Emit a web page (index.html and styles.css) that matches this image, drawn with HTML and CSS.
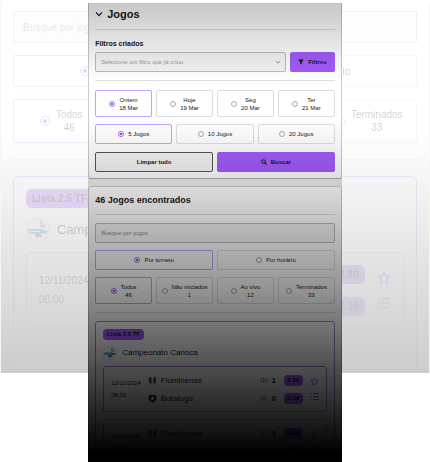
FILE: index.html
```
<!DOCTYPE html>
<html lang="pt-BR">
<head>
<meta charset="utf-8">
<meta name="viewport" content="width=device-width, initial-scale=1">
<title>Jogos</title>
<link rel="stylesheet" href="styles.css">
</head>
<body>
<svg class="sprite" aria-hidden="true">
  <symbol id="star" viewBox="0 0 24 24"><path d="M12 2l3 6.500 7 .8-5.200 4.800 1.400 7L12 17.600l-6.200 3.500 1.400-7L2 9.300l7-.8z" fill="none" stroke="currentColor" stroke-width="2.600" stroke-linejoin="round"/></symbol>
  <symbol id="list" viewBox="0 0 24 24"><path d="M8 4h15M8 12h15M8 20h15M1 4h3M1 12h3M1 20h3" fill="none" stroke="currentColor" stroke-width="2.800"/></symbol>
  <symbol id="league" viewBox="0 0 24 24"><circle cx="12" cy="12" r="11.300" fill="#fff" stroke="#c9ced4"/><path d="M2.500 11h13l3 1.500h3v3h-6l-2 1.500h-4l-1.500-1.500H2.500z" fill="#3d86b8"/><path d="M9 17h7v2.500l-3-1-3 1.500z" fill="#2b6a99"/><path d="M13 9l2-3 2 1 2-2 .5 3-2 2.500z" fill="#6fb5d8"/><circle cx="15" cy="4.500" r="1.300" fill="#4b9a7d"/><path d="M4 13.500h10" stroke="#fff"/></symbol>
  <symbol id="flu" viewBox="0 0 24 24"><path d="M1 6l5-4 6 2 6-2 5 4c-3 4 0 8-3 12-2 3-5 4-8 5-3-1-6-2-8-5C1 14 4 10 1 6z" fill="#f2f2f2"/><path d="M1 6l5-4 3 1v19c-2-1-4-2-5-4C1 14 4 10 1 6z" fill="#b01c3e"/><path d="M23 6l-5-4-3 1v19c2-1 4-2 5-4 3-4 0-8 3-12z" fill="#12704f"/><path d="M8 8l8 7M16 8l-8 7" stroke="#888" stroke-width="1.600"/></symbol>
  <symbol id="bot" viewBox="0 0 24 24"><path d="M2 4l6-1 4-2 4 2 6 1c1 6 1 10-2 14-2 2-5 4-8 5-3-1-6-3-8-5C1 14 1 10 2 4z" fill="#161616"/><path d="M12 5l2 4.500 5 .5-4 3.500 1.300 5L12 16l-4.300 2.500 1.300-5L5 10l5-.5z" fill="#fff"/></symbol>
</svg>

<div class="stage">
  <div class="backdrop" aria-hidden="true" inert>
    <div class="results">
      <input class="field" type="text" placeholder="Busque por jogos" aria-label="Busque por jogos">
      <div class="choices">
        <label class="choice"><input type="radio" name="bg-order" checked><span>Por torneio</span></label>
        <label class="choice"><input type="radio" name="bg-order"><span>Por horário</span></label>
      </div>
      <div class="choices tall">
        <label class="choice"><input type="radio" name="bg-status" checked><span>Todos<br>46</span></label>
        <label class="choice"><input type="radio" name="bg-status"><span>Não iniciados<br>1</span></label>
        <label class="choice"><input type="radio" name="bg-status"><span>Ao vivo<br>12</span></label>
        <label class="choice"><input type="radio" name="bg-status"><span>Terminados<br>33</span></label>
      </div>
      <hr class="rule">
      <section class="league">
        <span class="badge">Lista 2.5 TF</span>
        <h3 class="league-name"><svg><use href="#league"/></svg>Campeonato Carioca</h3>
        <article class="match">
          <div class="when"><span>12/11/2024</span><span>08:00</span></div>
          <div class="teams">
            <div class="team"><svg><use href="#flu"/></svg><span class="name">Fluminense</span><small>(1)</small><b>1</b><span class="odd">2.80</span></div>
            <div class="team"><svg><use href="#bot"/></svg><span class="name">Botafogo</span><small>(0)</small><b>0</b><span class="odd">2.19</span></div>
          </div>
          <div class="actions">
            <button type="button" aria-label="Favoritar"><svg><use href="#star"/></svg></button>
            <button type="button" aria-label="Detalhes"><svg><use href="#list"/></svg></button>
          </div>
        </article>
      </section>
    </div>
  </div>

  <main class="phone">
    <section class="card filters">
      <h1 class="title"><svg viewBox="0 0 12 12"><path d="M1.500 3.500L6 8.500l4.500-5" fill="none" stroke="currentColor" stroke-width="1.800"/></svg>Jogos</h1>
      <hr class="rule">
      <label class="caption" for="saved">Filtros criados</label>
      <div class="saved">
        <div class="select">
          <select class="field" id="saved"><option>Selecione um filtro que já criou</option></select>
          <svg viewBox="0 0 12 12"><path d="M1.500 3.500L6 8.500l4.500-5" fill="none" stroke="currentColor" stroke-width="1.500"/></svg>
        </div>
        <button class="btn primary" type="button"><svg viewBox="0 0 12 12"><path d="M.5 1h11L7.500 6v5l-3-1.500V6z" fill="currentColor"/></svg>Filtros</button>
      </div>
      <hr class="rule">
      <div class="choices tall">
        <label class="choice"><input type="radio" name="day" checked><span>Ontem<br>18 Mar</span></label>
        <label class="choice"><input type="radio" name="day"><span>Hoje<br>19 Mar</span></label>
        <label class="choice"><input type="radio" name="day"><span>Seg<br>20 Mar</span></label>
        <label class="choice"><input type="radio" name="day"><span>Ter<br>21 Mar</span></label>
      </div>
      <div class="choices">
        <label class="choice"><input type="radio" name="count" checked><span>5 Jogos</span></label>
        <label class="choice"><input type="radio" name="count"><span>10 Jogos</span></label>
        <label class="choice"><input type="radio" name="count"><span>20 Jogos</span></label>
      </div>
      <div class="buttons">
        <button class="btn" type="button">Limpar tudo</button>
        <button class="btn primary" type="button"><svg viewBox="0 0 12 12"><circle cx="5" cy="5" r="3.500" fill="none" stroke="currentColor" stroke-width="2"/><path d="M7.500 7.500L11 11" stroke="currentColor" stroke-width="2.200"/></svg>Buscar</button>
      </div>
    </section>

    <section class="card results">
      <h2 class="found">46 Jogos encontrados</h2>
      <hr class="rule">
      <input class="field" type="text" placeholder="Busque por jogos" aria-label="Busque por jogos">
      <div class="choices">
        <label class="choice"><input type="radio" name="order" checked><span>Por torneio</span></label>
        <label class="choice"><input type="radio" name="order"><span>Por horário</span></label>
      </div>
      <div class="choices tall">
        <label class="choice"><input type="radio" name="status" checked><span>Todos<br>46</span></label>
        <label class="choice"><input type="radio" name="status"><span>Não iniciados<br>1</span></label>
        <label class="choice"><input type="radio" name="status"><span>Ao vivo<br>12</span></label>
        <label class="choice"><input type="radio" name="status"><span>Terminados<br>33</span></label>
      </div>
      <hr class="rule">
      <section class="league">
        <span class="badge">Lista 2.5 TF</span>
        <h3 class="league-name"><svg><use href="#league"/></svg>Campeonato Carioca</h3>
        <article class="match">
          <div class="when"><span>12/11/2024</span><span>08:00</span></div>
          <div class="teams">
            <div class="team"><svg><use href="#flu"/></svg><span class="name">Fluminense</span><small>(1)</small><b>1</b><span class="odd">2.80</span></div>
            <div class="team"><svg><use href="#bot"/></svg><span class="name">Botafogo</span><small>(0)</small><b>0</b><span class="odd">2.19</span></div>
          </div>
          <div class="actions">
            <button type="button" aria-label="Favoritar"><svg><use href="#star"/></svg></button>
            <button type="button" aria-label="Detalhes"><svg><use href="#list"/></svg></button>
          </div>
        </article>
        <article class="match quiet">
          <div class="when"><span>12/11/2024</span><span>08:00</span></div>
          <div class="teams">
            <div class="team"><svg><use href="#flu"/></svg><span class="name">Fluminense</span><small>(1)</small><b>1</b><span class="odd">2.80</span></div>
            <div class="team"><svg><use href="#bot"/></svg><span class="name">Botafogo</span><small>(0)</small><b>0</b><span class="odd">2.19</span></div>
          </div>
          <div class="actions">
            <button type="button" aria-label="Favoritar"><svg><use href="#star"/></svg></button>
            <button type="button" aria-label="Detalhes"><svg><use href="#list"/></svg></button>
          </div>
        </article>
      </section>
    </section>
  </main>
</div>
</body>
</html>
```
FILE: styles.css
```
* { box-sizing: border-box; margin: 0; }

body {
  background: #fff;
  color: #161616;
  font-family: "Liberation Sans", Arial, sans-serif;
}

.sprite { display: none; }
svg { display: block; flex: none; }
button, input, select { font: inherit; color: inherit; }

/* The phone panel and its enlarged, faded copy share one grid cell. */
.stage {
  display: grid;
  grid-template: 100vh / 1fr;
  padding-top: 3px;
  height: 100vh;
  overflow: hidden;
}

.backdrop, .phone { grid-area: 1 / 1; position: relative; overflow: hidden; }

.backdrop {
  --text: 10px;
  --line: 13px;
  --control: 32px;
  --tile: 44px;
  --gap: 12px;
  --col-gap: 6px;
  --radio: 10px;
  --name: 13px;
  --logo: 24px;
  --crest: 15px;
  --icon: 14px;
  --row: 32px;
  --pill-w: 32px;
  --pill-h: 19px;
  --pill-r: 6px;
  --section: 16px;
  --date-gap: 6px;
  --action-gap: 11px;
  --inset: 12px;
  align-self: start;
  height: 80vh;
  border: solid #f6f6f6;
  border-width: 0 1px;
}
.backdrop .results {
  padding: 8px 12px;
  opacity: .2;
  mask-image: linear-gradient(#000 55%, rgb(0 0 0 / 30%) 90%);
}
.backdrop .league { padding-bottom: 50px; border-color: #b9a2f5; }
.backdrop .match { border-color: #c4b5e8; }
.backdrop .league, .backdrop .match { border-radius: 5px; }

.phone {
  --text: 6px;
  --line: 8px;
  --control: 20px;
  --tile: 27px;
  --gap: 7px;
  --col-gap: 4px;
  --radio: 6px;
  --name: 8px;
  --logo: 14px;
  --crest: 9px;
  --icon: 9px;
  --row: 18px;
  --pill-w: 19px;
  --pill-h: 11px;
  --pill-r: 4px;
  --section: 8px;
  --date-gap: 4px;
  --action-gap: 6px;
  --inset: 7px;
  width: 59%;
  height: calc(100vh - 3px);
  justify-self: center;
  background: #eee;
}

.backdrop::after, .phone::after {
  content: "";
  position: absolute;
  inset: 0;
  pointer-events: none;
}
.backdrop::after { background: linear-gradient(transparent 35%, rgb(0 0 0 / 20%)); }
.phone::after {
  background:
    linear-gradient(rgb(0 0 0 / 22%), transparent 17%),
    linear-gradient(transparent 25%, rgb(0 0 0 / 14%) 40%, rgb(0 0 0 / 43%) 63%, rgb(0 0 0 / 62%) 75%, rgb(0 0 0 / 82%) 87%, #000 98%);
}

.card {
  padding: 0 6px;
  border: 1px solid #ccc;
  background: #fff;
}
.filters { border-top: 0; border-bottom-color: #aaa; border-radius: 0 0 3px 3px; padding-bottom: 6px; margin-bottom: 7px; }
.card.results { border-radius: 3px 3px 0 0; }

.rule { border: 0; border-top: 1px solid #ddd; margin: var(--section) 0; }
.filters .rule { margin-bottom: 9px; }

.title {
  display: flex;
  align-items: center;
  gap: 4px;
  padding-top: 4px;
  font-size: 11px;
  line-height: 14px;
}
.title svg { width: 8px; height: 8px; }
.caption { display: block; font-size: 7px; font-weight: 700; line-height: 10px; margin-bottom: 3px; }
.found { padding-top: 7px; font-size: 9px; line-height: 12px; }

.field {
  display: block;
  width: 100%;
  height: var(--control);
  padding: 0 5px;
  border: 1px solid #bbb;
  border-radius: 2px;
  background: #f4f4f4;
  color: #999;
  font-size: var(--text);
  appearance: none;
}
.field::placeholder { color: #888; opacity: 1; }
.backdrop .field { padding: 0 9px; }

.saved { display: grid; grid-template-columns: 1fr 45px; gap: 4px; }
.select { display: grid; align-items: center; }
.select > * { grid-area: 1 / 1; }
.select svg { justify-self: end; width: 6px; height: 6px; margin-right: 5px; color: #777; pointer-events: none; }

.btn {
  display: flex;
  align-items: center;
  justify-content: center;
  gap: 4px;
  height: var(--control);
  padding: 0;
  border: 1px solid #555;
  border-radius: 2px;
  background: #f4f4f4;
  font-size: var(--text);
  font-weight: 700;
}
.btn svg { width: 6px; height: 6px; }
.btn.primary { border-color: #a35cfa; background: #a35cfa; }
.buttons { display: grid; grid-template-columns: 1fr 1fr; gap: var(--col-gap); margin-top: 8px; }

.choices { display: grid; grid-auto-flow: column; grid-auto-columns: minmax(0, 1fr); gap: var(--col-gap); }
.choices + .choices, .field + .choices { margin-top: var(--gap); }
.choice {
  display: flex;
  align-items: center;
  justify-content: center;
  gap: var(--col-gap);
  height: var(--control);
  border: 1px solid #ddd;
  border-radius: 2px;
  font-size: var(--text);
  line-height: var(--line);
  text-align: center;
  white-space: nowrap;
}
.tall .choice { height: var(--tile); }
.choice:has(:checked) { border-color: #c4a0fa; }
.choice input {
  flex: none;
  width: var(--radio);
  height: var(--radio);
  margin: 0;
  border: 1px solid #aaa;
  border-radius: 50%;
  appearance: none;
}
.choice input:checked { border-color: #a66bf2; background: radial-gradient(circle, #8c46e8 35%, transparent 40%); }

.league {
  padding: var(--inset);
  border: 1px solid #a584d8;
  border-radius: 3px;
}
.badge {
  display: block;
  width: fit-content;
  padding: 0 4px;
  border-radius: var(--pill-r);
  background: #a35cfa;
  font-size: var(--text);
  font-weight: 700;
  line-height: var(--pill-h);
}
.backdrop .badge { padding: 0 6px; }
.league-name {
  display: flex;
  align-items: center;
  gap: 5px;
  margin: 6px 0;
  font-size: var(--name);
  font-weight: 400;
  line-height: var(--logo);
}
.backdrop .league-name { margin: 10px 0; gap: 7px; }
.league-name svg { width: var(--logo); height: var(--logo); }

.match {
  display: flex;
  align-items: center;
  gap: var(--inset);
  padding: 4px 7px;
  border: 1px solid #a584d8;
  border-radius: 3px;
}
.match.quiet { border-color: #bbb; }
.match + .match { margin-top: 7px; }
.backdrop .match { padding: 5px 12px; }
.when { display: grid; gap: var(--date-gap); font-size: var(--text); line-height: var(--line); }
.teams { flex: 1; }
.team { display: flex; align-items: center; gap: 4px; height: var(--row); font-size: var(--name); }
.team svg { width: var(--crest); height: var(--crest); }
.name { flex: 1; }
.team small { font-size: var(--text); }
.odd {
  width: var(--pill-w);
  margin-left: 4px;
  border-radius: var(--pill-r);
  background: #a35cfa;
  font-size: var(--text);
  font-weight: 700;
  line-height: var(--pill-h);
  text-align: center;
}
.actions { display: grid; gap: var(--action-gap); color: #a35cfa; }
.actions button { padding: 0; border: 0; background: none; }
.actions svg { width: var(--icon); height: var(--icon); }
```
